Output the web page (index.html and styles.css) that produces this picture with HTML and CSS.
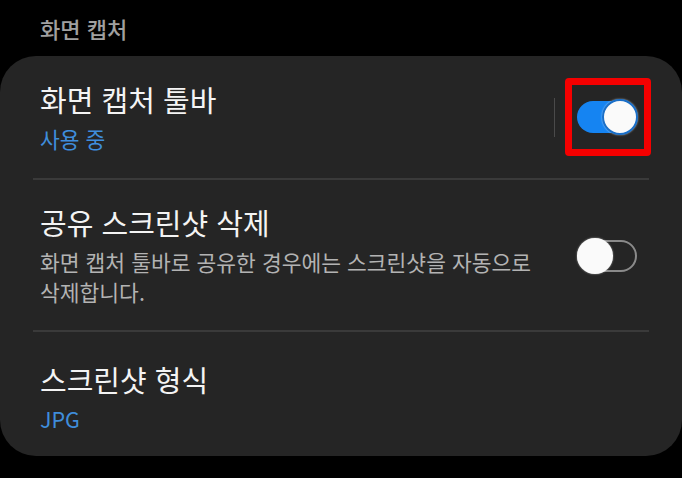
FILE: index.html
```html
<!DOCTYPE html>
<html lang="ko">
<head>
    <meta charset="UTF-8">
    <meta name="viewport" content="width=device-width, initial-scale=1.0">
    <title>화면 캡처</title>
    <link rel="stylesheet" href="styles.css">
</head>
<body>
    <h2 class="section-title">화면 캡처</h2>

    <div class="card">
        <!-- Toolbar row -->
        <div class="row first">
            <div class="row-text">
                <div class="row-title">화면 캡처 툴바</div>
                <div class="row-sub blue">사용 중</div>
            </div>
            <div class="row-side">
                <span class="vline"></span>
                <span class="highlight">
                    <span class="switch on"><span class="thumb"></span></span>
                </span>
            </div>
        </div>

        <div class="divider"></div>

        <!-- Delete shared screenshots -->
        <div class="row middle">
            <div class="row-text narrow">
                <div class="row-title">공유 스크린샷 삭제</div>
                <div class="row-sub gray">화면 캡처 툴바로 공유한 경우에는 스크린샷을 자동으로 삭제합니다.</div>
            </div>
            <div class="row-side">
                <span class="switch"><span class="thumb"></span></span>
            </div>
        </div>

        <div class="divider"></div>

        <!-- Format -->
        <div class="row last">
            <div class="row-text">
                <div class="row-title">스크린샷 형식</div>
                <div class="row-sub blue">JPG</div>
            </div>
        </div>
    </div>
</body>
</html>
```

FILE: styles.css
```css
body {
    margin: 0;
    background: #000;
    font-family: "Noto Sans CJK KR", "Noto Sans", sans-serif;
    color: #f4f4f4;
}
.section-title {
    margin: 0;
    padding: 12px 40px 0;
    height: 45px;
    box-sizing: border-box;
    font-size: 22px;
    font-weight: 500;
    line-height: 32px;
    color: #a0a0a0;
}
.card {
    margin-top: 11px;
    background: #252525;
    border-radius: 36px;
}
.row {
    display: flex;
    align-items: center;
    padding: 0 45px 0 40px;
}
.row.first {
    padding-top: 22px;
    padding-bottom: 22px;
}
.row.middle {
    padding-top: 24px;
    padding-bottom: 23px;
}
.row.last {
    padding-top: 29px;
    padding-bottom: 22px;
}
.row-text {
    flex: 1;
    word-break: keep-all;
}
.row-text.narrow {
    flex: 0 0 520px;
    margin-right: auto;
}
.row-title {
    font-size: 29px;
    line-height: 36px;
}
.row-sub {
    margin-top: 7px;
    font-size: 21.5px;
    line-height: 30px;
}
.gray {
    color: #b3b3b3;
}
.blue {
    color: #3f8ddb;
}
.divider {
    height: 2px;
    background: #3a3a3a;
    margin: 0 33px;
}
.row-side {
    display: flex;
    align-items: center;
}
.vline {
    width: 1px;
    height: 39px;
    background: #4a4a4a;
    margin-right: 10px;
}
.highlight {
    display: flex;
    align-items: center;
    border: 7px solid #f50000;
    border-radius: 4px;
    padding: 16px 7px 16px 5px;
    margin-right: -14px;
}
.switch {
    position: relative;
    display: block;
    width: 60px;
    height: 32px;
    border: 2px solid #8a8a8a;
    border-radius: 18px;
    box-sizing: border-box;
}
.switch .thumb {
    position: absolute;
    top: -4px;
    left: -2px;
    width: 36px;
    height: 36px;
    border-radius: 50%;
    background: #fafafa;
    box-shadow: 0 0 2px rgba(255,255,255,0.6);
}
.switch.on {
    border: none;
    background: #1584f2;
}
.switch.on .thumb {
    top: -2px;
    left: auto;
    right: -1px;
    border: 2px solid #1a6fc8;
    box-sizing: border-box;
}
```
